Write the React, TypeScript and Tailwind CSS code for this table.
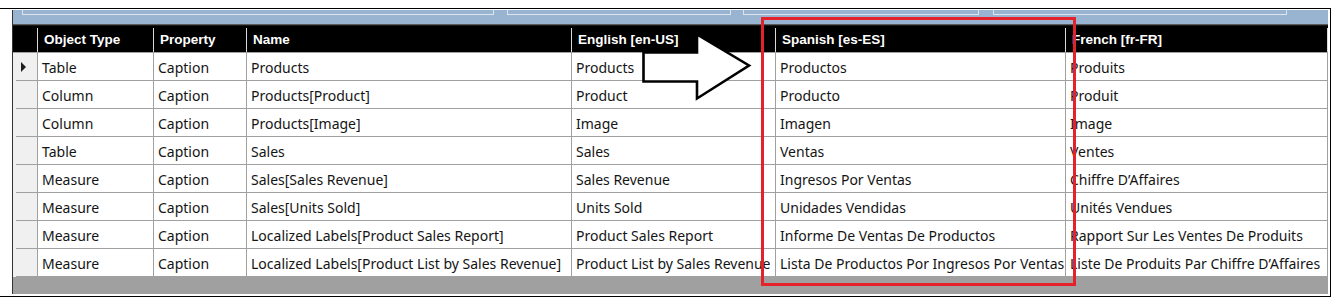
const cols = [
  { label: "Object Type", w: "w-[116px]" },
  { label: "Property", w: "w-[93px]" },
  { label: "Name", w: "w-[325px]" },
  { label: "English [en-US]", w: "w-[204px]" },
  { label: "Spanish [es-ES]", w: "w-[290px]" },
  { label: "French [fr-FR]", w: "w-[262px]" },
];

const rows = [
  ["Table", "Caption", "Products", "Products", "Productos", "Produits"],
  ["Column", "Caption", "Products[Product]", "Product", "Producto", "Produit"],
  ["Column", "Caption", "Products[Image]", "Image", "Imagen", "Image"],
  ["Table", "Caption", "Sales", "Sales", "Ventas", "Ventes"],
  ["Measure", "Caption", "Sales[Sales Revenue]", "Sales Revenue", "Ingresos Por Ventas", "Chiffre D\u2019Affaires"],
  ["Measure", "Caption", "Sales[Units Sold]", "Units Sold", "Unidades Vendidas", "Unités Vendues"],
  ["Measure", "Caption", "Localized Labels[Product Sales Report]", "Product Sales Report", "Informe De Ventas De Productos", "Rapport Sur Les Ventes De Produits"],
  ["Measure", "Caption", "Localized Labels[Product List by Sales Revenue]", "Product List by Sales Revenue", "Lista De Productos Por Ingresos Por Ventas", "Liste De Produits Par Chiffre D\u2019Affaires"],
];

const cellFont = { fontFamily: '"Noto Sans", "Open Sans", sans-serif' };
const headFont = { fontFamily: '"Liberation Sans", Arial, sans-serif' };

function HeaderCell({ label, w }: { label?: string; w: string }) {
  return (
    <div className={`${w} flex h-full shrink-0`}>
      <div
        className="flex-1 overflow-hidden whitespace-nowrap pl-[6px] pt-[1px] text-[13.5px] font-bold leading-[26px] text-white"
        style={headFont}
      >
        {label}
      </div>
      <div className="mt-[2px] w-px bg-[#d8d8d8]" />
    </div>
  );
}

function Row({ cells, current }: { cells: string[]; current?: boolean }) {
  return (
    <div className="flex h-[28px]">
      <div className="flex w-[25px] shrink-0 flex-col border-r border-[#a0a0a0] bg-[#f0f0f0]">
        <div className="flex flex-1 items-center pl-[8px]">
          {current && (
            <svg width="5" height="10" viewBox="0 0 5 10">
              <polygon points="0,0 5,5 0,10" fill="#1e1e1e" />
            </svg>
          )}
        </div>
        <div className="ml-[3px] h-px bg-[#a0a0a0]" />
      </div>
      {cells.map((c, i) => (
        <div
          key={i}
          className={`${cols[i].w} shrink-0 overflow-hidden whitespace-nowrap border-b border-r border-[#a0a0a0] bg-white pl-[4px] pt-[2px] text-[14px] leading-[25px] text-[#141414]`}
          style={cellFont}
        >
          {c}
        </div>
      ))}
    </div>
  );
}

export default function App() {
  return (
    <div className="relative h-[307px] w-[1341px] overflow-hidden bg-white pt-[8px]">
      <div className="flex h-[289px] w-[1331px] flex-col border-b border-r border-t border-black pb-[2px] pl-[12px] pr-[2px] pt-[1px]">
        <div className="flex w-[1316px] flex-1 flex-col border-l border-[#333333]">
          {/* caption strip */}
          <div className="flex h-[14px] bg-[#99b4d1]">
            <div className="ml-[9px] h-[5px] w-[472px] border-b border-l border-r border-[#dde4ec]" />
            <div className="ml-[13px] h-[5px] w-[224px] border-b border-l border-r border-[#dde4ec]" />
            <div className="ml-[12px] h-[5px] w-[236px] border-b border-l border-r border-[#dde4ec]" />
            <div className="ml-[14px] h-[5px] w-[294px] border-b border-l border-r border-[#dde4ec]" />
          </div>
          <div className="h-px bg-[#5a5a5a]" />
          <div className="h-px bg-[#1a1a1a]" />

          {/* column headers */}
          <div className="flex h-[27px] border-b border-[#a0a0a0] bg-black">
            <HeaderCell w="w-[25px]" />
            {cols.map((c) => (
              <HeaderCell key={c.label} label={c.label} w={c.w} />
            ))}
          </div>

          {rows.map((r, i) => (
            <Row key={i} cells={r} current={i === 0} />
          ))}

          <div className="flex-1 bg-[#a0a0a0]" />
        </div>
      </div>

      {/* annotation: highlight box */}
      <div className="absolute left-[761px] top-[17px] h-[269px] w-[315px] border-[3px] border-[#e5222b]" />

      {/* annotation: arrow */}
      <svg className="absolute left-0 top-0" width="1341" height="307">
        <polygon
          points="643.5,52.5 697,52.5 697,34.5 749,65.5 697,98.5 697,81.5 643.5,81.5"
          fill="white"
          stroke="black"
          strokeWidth="2.6"
          strokeLinejoin="miter"
        />
      </svg>
    </div>
  );
}
